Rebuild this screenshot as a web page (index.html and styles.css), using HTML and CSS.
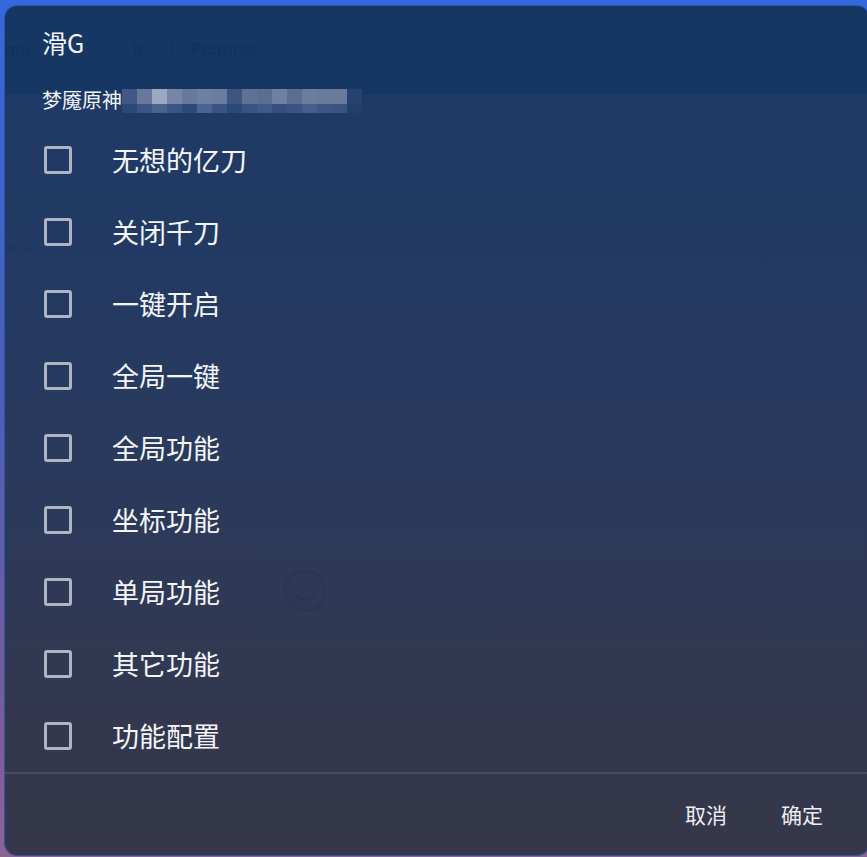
FILE: index.html
```html
<!DOCTYPE html>
<html lang="zh">
<head>
<meta charset="utf-8">
<title>滑G</title>
<link rel="stylesheet" href="styles.css">
</head>
<body>
<div class="dialog">
  <div class="ghost ghost-top"><span>mu</span><span class="g0">0</span><span class="g1">|</span><span class="g2">Pictures</span></div>
  <div class="ghost ghost-l1">wx–x</div>
  <div class="ghost ghost-l2">wx–x</div>
  <svg class="ghost-smile" width="50" height="50" viewBox="0 0 50 50"><circle cx="25" cy="26" r="20" fill="none" stroke="#24304c" stroke-width="3" opacity="0.35"/><path d="M14 28 Q25 40 36 28" fill="none" stroke="#24304c" stroke-width="3" opacity="0.35"/></svg>

  <div class="header">
    <div class="title">滑G</div>
    <div class="subtitle"><span>梦魇原神</span>
      <div class="mosaic">
        <i></i><i></i><i></i><i></i><i></i><i></i><i></i><i></i><i></i><i></i><i></i><i></i><i></i><i></i><i></i><i></i>
        <i></i><i></i><i></i><i></i><i></i><i></i><i></i><i></i><i></i><i></i><i></i><i></i><i></i><i></i><i></i><i></i>
      </div>
    </div>
  </div>
  <ul class="list">
    <li class="item"><span class="box"></span><span class="label">无想的亿刀</span></li>
    <li class="item"><span class="box"></span><span class="label">关闭千刀</span></li>
    <li class="item"><span class="box"></span><span class="label">一键开启</span></li>
    <li class="item"><span class="box"></span><span class="label">全局一键</span></li>
    <li class="item"><span class="box"></span><span class="label">全局功能</span></li>
    <li class="item"><span class="box"></span><span class="label">坐标功能</span></li>
    <li class="item"><span class="box"></span><span class="label">单局功能</span></li>
    <li class="item"><span class="box"></span><span class="label">其它功能</span></li>
    <li class="item"><span class="box"></span><span class="label">功能配置</span></li>
  </ul>
  <div class="footer">
    <span class="btn">取消</span>
    <span class="btn">确定</span>
  </div>
</div>
</body>
</html>
```

FILE: styles.css
```css
html, body {
  margin: 0;
  padding: 0;
  width: 867px;
  height: 857px;
  overflow: hidden;
}
body {
  background: linear-gradient(180deg, #3568dc 0%, #4a5fb8 45%, #7a5c98 85%, #8c6596 100%);
  font-family: "Noto Sans CJK SC", "Noto Sans", sans-serif;
  color: #f4f5f8;
  padding: 6px 0 2px 5px;
  box-sizing: border-box;
}
.dialog {
  position: relative;
  width: 864px;
  height: 849px;
  border-radius: 12px;
  box-shadow: 0 0 0 1px #2c55a8;
  background:
    linear-gradient(180deg, #163764 0, #163764 89px, rgba(0,0,0,0) 89px),
    linear-gradient(180deg, #1d3a67 0%, #213a64 25%, #2a3a5c 55%, #323850 80%, #363749 100%);
  display: flex;
  flex-direction: column;
  overflow: hidden;
}
.ghost {
  position: absolute;
  color: #13315d;
  font-family: "Liberation Sans", sans-serif;
  font-weight: bold;
  font-size: 16px;
  opacity: 0.8;
}
.ghost-top { left: 0; top: 34px; font-size: 17px; }
.ghost-top .g0 { position: absolute; left: 128px; }
.ghost-top .g1 { position: absolute; left: 164px; }
.ghost-top .g2 { position: absolute; left: 186px; }
.ghost-l1 { left: 0; top: 236px; color: #1e3761; font-weight: normal; font-size: 12px; }
.ghost-l2 { left: 0; top: 494px; color: #29375a; font-weight: normal; font-size: 12px; }
.ghost-smile { position: absolute; left: 275px; top: 559px; }

.header {
  padding: 20px 0 0 37px;
}
.title {
  font-size: 25px;
  line-height: 32px;
}
.subtitle {
  margin-top: 28px;
  display: flex;
  align-items: center;
  font-size: 20px;
  line-height: 28px;
}
.mosaic {
  display: grid;
  grid-template-columns: repeat(16, 15px);
  grid-template-rows: 15px 9px;
  margin-top: 2px;
}
.mosaic i { display: block; background: #30507e; }
.mosaic i:nth-child(1) { background: #3f5886; }
.mosaic i:nth-child(2) { background: #68799c; }
.mosaic i:nth-child(3) { background: #9ba8c0; }
.mosaic i:nth-child(4) { background: #7586a6; }
.mosaic i:nth-child(5) { background: #68799c; }
.mosaic i:nth-child(6) { background: #6f81a2; }
.mosaic i:nth-child(7) { background: #6b7d9f; }
.mosaic i:nth-child(8) { background: #3e5580; }
.mosaic i:nth-child(9) { background: #5f7296; }
.mosaic i:nth-child(10) { background: #5a6e92; }
.mosaic i:nth-child(11) { background: #7080a2; }
.mosaic i:nth-child(12) { background: #5b6e92; }
.mosaic i:nth-child(13) { background: #6b7c9c; }
.mosaic i:nth-child(14) { background: #6a7a9a; }
.mosaic i:nth-child(15) { background: #6a7a9a; }
.mosaic i:nth-child(16) { background: #26436f; }
.mosaic i:nth-child(17) { background: #2c4877; }
.mosaic i:nth-child(18) { background: #3a5584; }
.mosaic i:nth-child(19) { background: #4a6290; }
.mosaic i:nth-child(20) { background: #3b5582; }
.mosaic i:nth-child(21) { background: #2e4a7a; }
.mosaic i:nth-child(22) { background: #4b6390; }
.mosaic i:nth-child(23) { background: #3a5380; }
.mosaic i:nth-child(24) { background: #2c4878; }
.mosaic i:nth-child(25) { background: #3a5382; }
.mosaic i:nth-child(26) { background: #40588a; }
.mosaic i:nth-child(27) { background: #35507e; }
.mosaic i:nth-child(28) { background: #3a5382; }
.mosaic i:nth-child(29) { background: #46608c; }
.mosaic i:nth-child(30) { background: #3d5684; }
.mosaic i:nth-child(31) { background: #3a5480; }
.mosaic i:nth-child(32) { background: #223f6c; }

.list {
  list-style: none;
  margin: 10px 0 0 0;
  padding: 0;
}
.item {
  height: 72px;
  display: flex;
  align-items: center;
  padding-left: 39px;
}
.box {
  width: 22px;
  height: 22px;
  border: 3px solid #aeb4c2;
  border-radius: 3px;
  flex: none;
}
.label {
  margin-left: 40px;
  font-size: 27px;
  line-height: 34px;
  color: #f5f6f9;
}
.footer {
  border-top: 2px solid #4a4d62;
  flex: 1;
  display: flex;
  justify-content: flex-end;
  align-items: center;
  gap: 54px;
  padding-right: 46px;
  padding-bottom: 1px;
}
.btn {
  font-size: 21px;
  line-height: 28px;
  color: #eceef3;
}
```
